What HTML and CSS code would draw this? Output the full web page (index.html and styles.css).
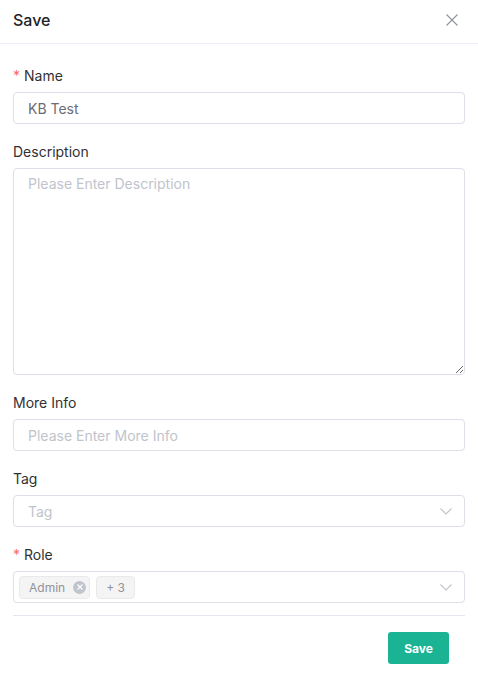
FILE: index.html
```html
<!DOCTYPE html>
<html>
<head>
<meta charset="utf-8">
<link rel="stylesheet" href="styles.css">
</head>
<body>
<div class="dialog">
  <header class="dlg-head">
    <h2 class="dlg-title">Save</h2>
    <button class="dlg-close" type="button" aria-label="Close">
      <svg width="12" height="12" viewBox="0 0 12 12"><path d="M0.5 0.5 L11.5 11.5 M11.5 0.5 L0.5 11.5" stroke="#909399" stroke-width="1.1" fill="none"/></svg>
    </button>
  </header>
  <form class="dlg-body">
    <div class="item">
      <label class="lbl"><span class="req">*</span>Name</label>
      <input class="ctl" type="text" value="KB Test">
    </div>
    <div class="item">
      <label class="lbl">Description</label>
      <textarea class="ctl area" placeholder="Please Enter Description"></textarea>
    </div>
    <div class="item">
      <label class="lbl">More Info</label>
      <input class="ctl" type="text" placeholder="Please Enter More Info">
    </div>
    <div class="item">
      <label class="lbl">Tag</label>
      <div class="ctl select">
        <span class="ph">Tag</span>
        <svg class="chev" width="12" height="7" viewBox="0 0 12 7"><path d="M0.5 0.5 L6 6 L11.5 0.5" stroke="#c0c4cc" stroke-width="1.1" fill="none"/></svg>
      </div>
    </div>
    <div class="item last">
      <label class="lbl"><span class="req">*</span>Role</label>
      <div class="ctl select tags">
        <span class="tag">Admin<span class="tag-x"><svg width="6" height="6" viewBox="0 0 6 6"><path d="M0.5 0.5 L5.5 5.5 M5.5 0.5 L0.5 5.5" stroke="#fff" stroke-width="1.1"/></svg></span></span>
        <span class="tag">+ 3</span>
        <svg class="chev" width="12" height="7" viewBox="0 0 12 7"><path d="M0.5 0.5 L6 6 L11.5 0.5" stroke="#c0c4cc" stroke-width="1.1" fill="none"/></svg>
      </div>
    </div>
    <div class="divider"></div>
    <div class="dlg-foot">
      <button class="btn-primary" type="button">Save</button>
    </div>
  </form>
</div>
</body>
</html>
```
FILE: styles.css
```css
* { box-sizing: border-box; }
html, body { margin: 0; padding: 0; background: #fff; }
body { font-family: Inter, "Liberation Sans", sans-serif; color: #303133; }
.dialog { width: 478px; }
.dlg-head {
  height: 44px;
  border-bottom: 1px solid #ebeef5;
  display: flex;
  align-items: center;
  justify-content: space-between;
  padding: 0 20px 0 13px;
}
.dlg-title { margin: 0; font-size: 16px; font-weight: 500; color: #1f2329; line-height: 22px; padding-bottom: 4px; }
.dlg-close { border: 0; background: none; padding: 0; width: 12px; height: 12px; display: flex; margin-bottom: 4px; }
.dlg-body { padding: 21px 13px 0; }
.item { margin-bottom: 17px; display: flex; flex-direction: column; }
.item.last { margin-bottom: 0; }
.lbl { font-size: 14px; line-height: 22px; color: #303133; margin-bottom: 5px; }
.req { color: #f56c6c; margin-right: 4px; }
.ctl {
  width: 100%;
  height: 32px;
  border: 1px solid #dcdfe6;
  border-radius: 4px;
  padding: 0 14px;
  font-family: inherit;
  font-size: 14px;
  color: #6a6d73;
  background: #fff;
  outline: none;
}
.ctl::placeholder { color: #c0c4cc; }
.area { height: 207px; padding: 5px 14px; line-height: 20px; resize: vertical; display: block; }
.select { display: flex; align-items: center; justify-content: space-between; padding-right: 12px; }
.ph { color: #c0c4cc; font-size: 14px; }
.chev { display: block; margin-left: auto; }
.tags { padding-left: 5px; gap: 6px; }
.tag {
  height: 23px;
  display: inline-flex;
  align-items: center;
  padding: 0 9px;
  background: #f4f4f5;
  border: 1px solid #e9e9eb;
  border-radius: 4px;
  color: #909399;
  font-size: 12px;
}
.tag-x {
  width: 13px; height: 13px; border-radius: 50%;
  background: #c0c4cc;
  display: inline-flex; align-items: center; justify-content: center;
  margin-left: 8px; margin-right: -6px;
}
.divider { height: 1px; background: #e4e7ed; margin-top: 12px; }
.dlg-foot { display: flex; justify-content: flex-end; padding: 16px 16px 0 0; }
.btn-primary {
  height: 32px;
  padding: 0 16px;
  border: 0;
  border-radius: 3px;
  background: #1ab394;
  color: #fff;
  font-family: inherit;
  font-size: 12px;
  font-weight: 700;
}
```
